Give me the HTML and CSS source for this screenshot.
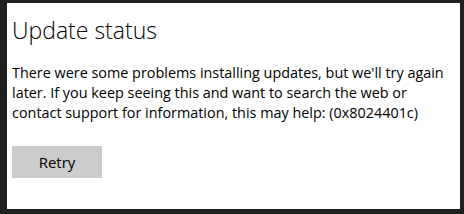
FILE: index.html
```html
<!DOCTYPE html>
<html lang="en">
<head>
<meta charset="UTF-8">
<title>Update status</title>
<link rel="stylesheet" href="styles.css">
</head>
<body>
    <div class="dialog">
        <h2>Update status</h2>
        <p class="message">There were some problems installing updates, but we'll try again later. If you keep seeing this and want to search the web or contact support for information, this may help: (0x8024401c)</p>
        <button class="retry-btn">Retry</button>
    </div>
</body>
</html>
```
FILE: styles.css
```css
html, body {
    margin: 0;
    padding: 0;
    height: 100%;
}
body {
    background-color: #202020;
    font-family: "Open Sans", "Noto Sans", sans-serif;
    color: #000;
    padding: 3px 4px 5px 7px;
    box-sizing: border-box;
}
.dialog {
    background-color: white;
    height: 206px;
    padding: 0 5px;
    box-sizing: border-box;
    overflow: hidden;
}
h2 {
    margin: 0;
    padding-top: 12px;
    font-size: 23px;
    font-weight: 300;
    line-height: 30px;
}
.message {
    margin: 18px 0 0 0;
    font-size: 14.4px;
    line-height: 20px;
    max-width: 436px;
}
.retry-btn {
    display: block;
    margin-top: 23px;
    width: 90px;
    height: 32px;
    border: none;
    background-color: #cccccc;
    font-family: "Open Sans", "Noto Sans", sans-serif;
    font-size: 15px;
    color: #000;
}
```
